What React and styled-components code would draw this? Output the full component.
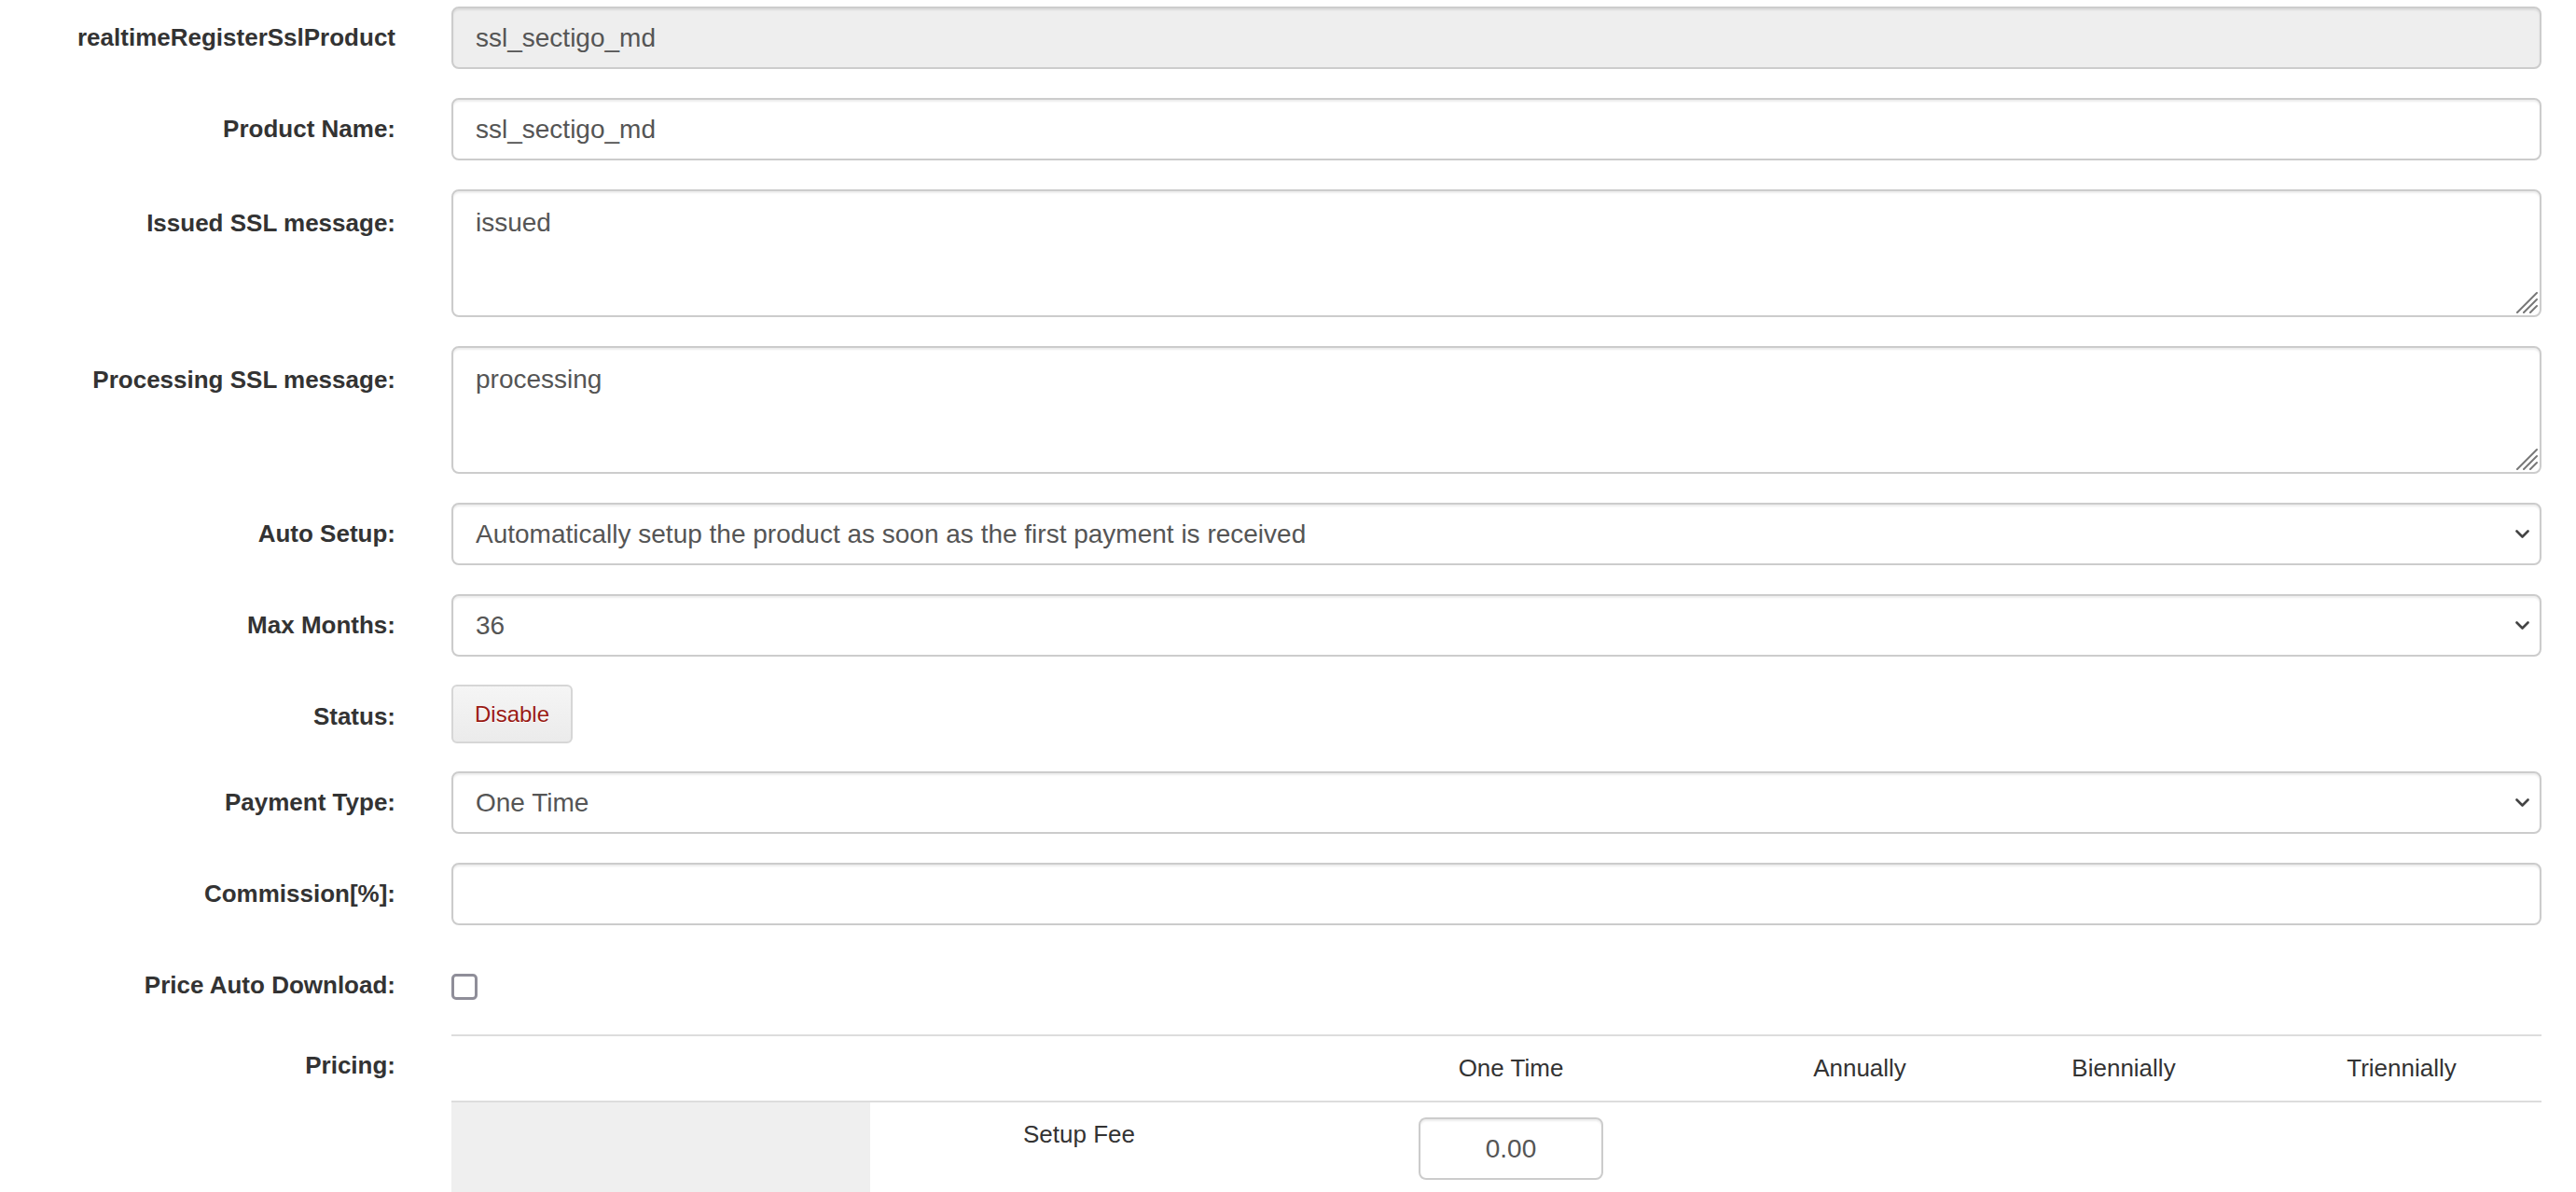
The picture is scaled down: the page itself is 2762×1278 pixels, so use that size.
import React from "react";
import styled, { createGlobalStyle, css } from "styled-components";

const GlobalStyle = createGlobalStyle`
  html, body {
    margin: 0;
    padding: 0;
    overflow: hidden;
    background: #fff;
  }
  body {
    font-family: "Liberation Sans", Arial, Helvetica, sans-serif;
    color: #333;
  }
`;

const Page = styled.div`
  padding: 7px 37px 0 0;
`;

const Row = styled.div`
  display: grid;
  grid-template-columns: 424px 1fr;
  column-gap: 60px;
  margin-bottom: ${(p) => (p.$gap ? p.$gap : 31)}px;
  align-items: start;
`;

const Label = styled.label`
  text-align: right;
  font-weight: 700;
  font-size: 26px;
  line-height: 37px;
  padding-top: ${(p) => (p.$top ? p.$top : 15)}px;
  color: #333;
  white-space: nowrap;
`;

const fieldBase = css`
  width: 100%;
  box-sizing: border-box;
  border: 2px solid #ccc;
  border-radius: 8px;
  box-shadow: inset 0 2px 2px rgba(0, 0, 0, 0.075);
  font-family: inherit;
  font-size: 28px;
  color: #555;
  padding: 12px 24px;
  background: #fff;
  outline: none;
  margin: 0;
`;

const TextInput = styled.input`
  ${fieldBase};
  display: block;
  height: 67px;
  background: ${(p) => (p.readOnly ? "#eee" : "#fff")};
`;

const AreaWrap = styled.div`
  position: relative;
`;

const TextArea = styled.textarea`
  ${fieldBase};
  display: block;
  height: 137px;
  resize: none;
  line-height: 39px;
  padding-top: 14px;
`;

const Grip = styled.svg`
  position: absolute;
  right: 4px;
  bottom: 4px;
  width: 24px;
  height: 24px;
  pointer-events: none;
`;

const SelectWrap = styled.div`
  position: relative;
`;

const Select = styled.select`
  ${fieldBase};
  display: block;
  height: 67px;
  appearance: none;
  -webkit-appearance: none;
  padding-right: 60px;
`;

const Chevron = styled.svg`
  position: absolute;
  right: 13px;
  top: 50%;
  width: 15px;
  height: 10px;
  transform: translateY(-50%);
  pointer-events: none;
`;

const StatusButton = styled.button`
  font-family: inherit;
  font-size: 24px;
  line-height: 35px;
  padding: 12px 23px;
  color: #9a1a14;
  text-shadow: 0 1px 0 #fff;
  background: linear-gradient(#f5f5f5, #ebebeb);
  border: 2px solid #d6d6d6;
  border-radius: 6px;
  cursor: pointer;
  justify-self: start;
`;

const Checkbox = styled.input`
  appearance: none;
  -webkit-appearance: none;
  display: block;
  width: 28px;
  height: 28px;
  box-sizing: border-box;
  margin: 21px 0 6px 0;
  border: 3px solid #8f8e99;
  border-radius: 5px;
  background: #fff;
`;

const PriceTable = styled.table`
  width: 100%;
  border-collapse: collapse;
  table-layout: fixed;
  border-top: 2px solid #ddd;
  font-size: 26px;
  color: #333;
`;

const HeadCell = styled.th`
  font-weight: 400;
  text-align: center;
  line-height: 37px;
  padding: 16px 0;
  border-bottom: 2px solid #ddd;
`;

const Cell = styled.td`
  text-align: center;
  vertical-align: top;
  line-height: 37px;
  padding: 16px 0;
  background: ${(p) => (p.$shade ? "#efefef" : "transparent")};
`;

const PriceInput = styled.input`
  ${fieldBase};
  width: 198px;
  height: 67px;
  text-align: center;
  padding: 12px 10px;
`;

const ChevronIcon = () => (
  <Chevron viewBox="0 0 15 10">
    <polyline
      points="1.5,1.5 7.5,7.5 13.5,1.5"
      fill="none"
      stroke="#444"
      strokeWidth="2.6"
      strokeLinecap="round"
      strokeLinejoin="round"
    />
  </Chevron>
);

const GripIcon = () => (
  <Grip viewBox="0 0 24 24">
    <g stroke="#777" strokeWidth="2" strokeLinecap="round">
      <line x1="2" y1="23" x2="23" y2="2" />
      <line x1="9" y1="23" x2="23" y2="9" />
      <line x1="16" y1="23" x2="23" y2="16" />
    </g>
  </Grip>
);

const periods = ["One Time", "Annually", "Biennially", "Triennially"];
const colWidths = [449, 448, 478, 270, 296, 300];

const App = () => {
  return (
    <>
      <GlobalStyle />
      <Page>
        <Row>
          <Label>realtimeRegisterSslProduct</Label>
          <TextInput readOnly defaultValue="ssl_sectigo_md" />
        </Row>

        <Row>
          <Label>Product Name:</Label>
          <TextInput defaultValue="ssl_sectigo_md" />
        </Row>

        <Row>
          <Label $top={18}>Issued SSL message:</Label>
          <AreaWrap>
            <TextArea defaultValue="issued" />
            <GripIcon />
          </AreaWrap>
        </Row>

        <Row>
          <Label $top={18}>Processing SSL message:</Label>
          <AreaWrap>
            <TextArea defaultValue="processing" />
            <GripIcon />
          </AreaWrap>
        </Row>

        <Row>
          <Label>Auto Setup:</Label>
          <SelectWrap>
            <Select defaultValue="payment">
              <option value="payment">
                Automatically setup the product as soon as the first payment is received
              </option>
              <option value="order">Automatically setup the product as soon as an order is placed</option>
              <option value="on">Automatically setup the product when you manually accept a pending order</option>
              <option value="">Do not automatically setup this product</option>
            </Select>
            <ChevronIcon />
          </SelectWrap>
        </Row>

        <Row $gap={30}>
          <Label>Max Months:</Label>
          <SelectWrap>
            <Select defaultValue="36">
              <option value="12">12</option>
              <option value="24">24</option>
              <option value="36">36</option>
            </Select>
            <ChevronIcon />
          </SelectWrap>
        </Row>

        <Row $gap={30}>
          <Label $top={16}>Status:</Label>
          <StatusButton type="button">Disable</StatusButton>
        </Row>

        <Row>
          <Label>Payment Type:</Label>
          <SelectWrap>
            <Select defaultValue="onetime">
              <option value="onetime">One Time</option>
              <option value="recurring">Recurring</option>
            </Select>
            <ChevronIcon />
          </SelectWrap>
        </Row>

        <Row>
          <Label>Commission[%]:</Label>
          <TextInput defaultValue="" />
        </Row>

        <Row>
          <Label>Price Auto Download:</Label>
          <div>
            <Checkbox type="checkbox" />
          </div>
        </Row>

        <Row>
          <Label>Pricing:</Label>
          <PriceTable>
            <colgroup>
              {colWidths.map((w, i) => (
                <col key={i} style={{ width: w }} />
              ))}
            </colgroup>
            <thead>
              <tr>
                <HeadCell />
                <HeadCell />
                {periods.map((p) => (
                  <HeadCell key={p}>{p}</HeadCell>
                ))}
              </tr>
            </thead>
            <tbody>
              <tr>
                <Cell $shade />
                <Cell>Setup Fee</Cell>
                <Cell>
                  <PriceInput defaultValue="0.00" />
                </Cell>
                <Cell />
                <Cell />
                <Cell />
              </tr>
            </tbody>
          </PriceTable>
        </Row>
      </Page>
    </>
  );
};

export default App;
